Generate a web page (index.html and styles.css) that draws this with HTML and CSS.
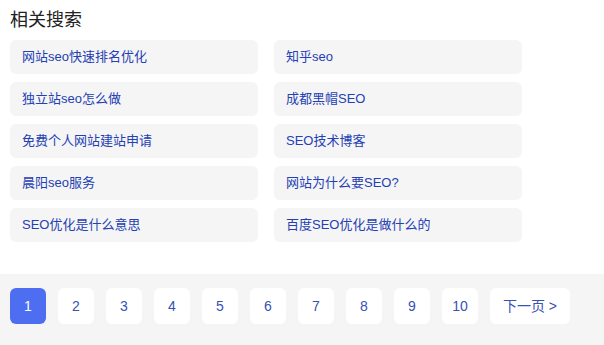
FILE: index.html
```html
<!DOCTYPE html>
<html>
<head>
    <meta charset="utf-8">
    <title>相关搜索</title>
    <link rel="stylesheet" href="styles.css">
</head>
<body>
    <div class="related">
        <h3 class="related-title">相关搜索</h3>
        <div class="related-grid">
            <a class="related-item" href="#">网站seo快速排名优化</a>
            <a class="related-item" href="#">知乎seo</a>
            <a class="related-item" href="#">独立站seo怎么做</a>
            <a class="related-item" href="#">成都黑帽SEO</a>
            <a class="related-item" href="#">免费个人网站建站申请</a>
            <a class="related-item" href="#">SEO技术博客</a>
            <a class="related-item" href="#">晨阳seo服务</a>
            <a class="related-item" href="#">网站为什么要SEO?</a>
            <a class="related-item" href="#">SEO优化是什么意思</a>
            <a class="related-item" href="#">百度SEO优化是做什么的</a>
        </div>
    </div>
    <div class="pager">
        <span class="page current">1</span>
        <a class="page" href="#">2</a>
        <a class="page" href="#">3</a>
        <a class="page" href="#">4</a>
        <a class="page" href="#">5</a>
        <a class="page" href="#">6</a>
        <a class="page" href="#">7</a>
        <a class="page" href="#">8</a>
        <a class="page" href="#">9</a>
        <a class="page" href="#">10</a>
        <a class="page next" href="#">下一页 &gt;</a>
    </div>
</body>
</html>
```

FILE: styles.css
```css
* {
    box-sizing: border-box;
    font-family: Arial, "Liberation Sans", "Noto Sans CJK SC", sans-serif;
}
body {
    margin: 0;
    background-color: #fff;
    width: 604px;
}
.related {
    padding: 8px 10px 32px;
}
.related-title {
    margin: 0 0 8px;
    font-size: 18px;
    font-weight: normal;
    line-height: 24px;
    color: #222;
}
.related-grid {
    display: grid;
    grid-template-columns: 248px 248px;
    column-gap: 16px;
    row-gap: 8px;
}
.related-item {
    display: block;
    height: 34px;
    line-height: 34px;
    padding: 0 12px;
    border-radius: 6px;
    background-color: #f5f5f6;
    color: #2440b3;
    font-size: 13px;
    text-decoration: none;
    white-space: nowrap;
}
.pager {
    display: flex;
    gap: 12px;
    background-color: #f5f5f6;
    padding: 14px 10px 21px;
}
.page {
    display: block;
    width: 36px;
    height: 36px;
    line-height: 36px;
    text-align: center;
    border-radius: 6px;
    background-color: #fff;
    color: #3951b3;
    font-size: 14px;
    text-decoration: none;
}
.page.current {
    background-color: #4e6ef2;
    color: #fff;
}
.page.next {
    width: 80px;
}
```
